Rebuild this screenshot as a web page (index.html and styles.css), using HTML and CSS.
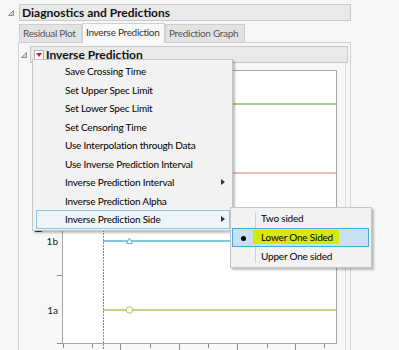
FILE: index.html
```html
<!DOCTYPE html>
<html lang="en">
<head>
    <meta charset="UTF-8">
    <title>Diagnostics and Predictions</title>
    <link rel="stylesheet" href="styles.css">
</head>
<body>

<div class="report">
    <!-- Outer outline -->
    <div class="outline-head">
        <span class="disc"><svg width="6" height="6"><polygon points="5.5,0.5 5.5,5.5 0.5,5.5" fill="#dadada" stroke="#8c8c8c"/></svg></span>
        <div class="title-bar">Diagnostics and Predictions</div>
    </div>

    <div class="outline-body">
        <div class="tabs">
            <div class="tab tab-residual">Residual Plot</div>
            <div class="tab tab-inverse active">Inverse Prediction</div>
            <div class="tab tab-graph">Prediction Graph</div>
        </div>

        <div class="tab-panel">
            <div class="outline-head inner">
                <span class="disc"><svg width="6" height="6"><polygon points="5.5,0.5 5.5,5.5 0.5,5.5" fill="#dadada" stroke="#8c8c8c"/></svg></span>
                <div class="title-bar">
                    <span class="menu-btn"><svg width="6" height="4"><polygon points="0,0 6,0 3,4" fill="#d0202a"/></svg></span>
                    Inverse Prediction
                </div>
            </div>

            <div class="plot">
                <svg class="chart" width="315" height="287" viewBox="0 0 315 287">
                    <text class="axis-title" transform="translate(12,170) rotate(-90)">Batch</text>

                    <rect x="32.5" y="7.5" width="274" height="273" fill="#fff" stroke="#a6a6a6"/>

                    <!-- reference lines -->
                    <line x1="33" x2="306" y1="41" y2="41" stroke="#8cba62" stroke-width="1.5"/>
                    <line x1="33" x2="306" y1="110" y2="110" stroke="#f3bbae" stroke-width="2"/>

                    <!-- batch 1b -->
                    <line x1="73" x2="306" y1="178" y2="178" stroke="#5bb5d5" stroke-width="1.5"/>
                    <polygon points="99.5,175 96.5,180.5 102.5,180.5" fill="#fff" stroke="#5bb5d5"/>

                    <!-- batch 1a -->
                    <line x1="73" x2="306" y1="247" y2="247" stroke="#a8c864" stroke-width="1.5"/>
                    <circle cx="99.5" cy="247" r="3.2" fill="#fff" stroke="#a8c864"/>

                    <line x1="73.5" x2="73.5" y1="8" y2="287" stroke="#5f8af2" stroke-dasharray="2 1"/>

                    <!-- y axis -->
                    <g stroke="#8c8c8c">
                        <line x1="27" x2="32" y1="7.5" y2="7.5"/>
                        <line x1="27" x2="32" y1="144.5" y2="144.5"/>
                        <line x1="27" x2="32" y1="212.5" y2="212.5"/>
                        <line x1="27" x2="32" y1="280.5" y2="280.5"/>
                    </g>
                    <text class="tick-label" x="28" y="182" text-anchor="end">1b</text>
                    <text class="tick-label" x="28" y="251" text-anchor="end">1a</text>

                    <!-- x axis -->
                    <g stroke="#8c8c8c">
                        <line x1="33.5" x2="33.5" y1="281" y2="285"/>
                        <line x1="62.5" x2="62.5" y1="281" y2="285"/>
                        <line x1="90.5" x2="90.5" y1="281" y2="287"/>
                        <line x1="120.5" x2="120.5" y1="281" y2="285"/>
                        <line x1="149.5" x2="149.5" y1="281" y2="287"/>
                        <line x1="178.5" x2="178.5" y1="281" y2="285"/>
                        <line x1="207.5" x2="207.5" y1="281" y2="287"/>
                        <line x1="237.5" x2="237.5" y1="281" y2="285"/>
                        <line x1="265.5" x2="265.5" y1="281" y2="287"/>
                        <line x1="294.5" x2="294.5" y1="281" y2="285"/>
                    </g>
                </svg>
            </div>
        </div>
    </div>
</div>

<!-- Popup menu -->
<div class="menu">
    <div class="menu-item">Save Crossing Time</div>
    <div class="menu-item">Set Upper Spec Limit</div>
    <div class="menu-item">Set Lower Spec Limit</div>
    <div class="menu-item">Set Censoring Time</div>
    <div class="menu-item">Use Interpolation through Data</div>
    <div class="menu-item">Use Inverse Prediction Interval</div>
    <div class="menu-item has-sub">Inverse Prediction Interval</div>
    <div class="menu-item">Inverse Prediction Alpha</div>
    <div class="menu-item has-sub open">Inverse Prediction Side</div>
</div>

<div class="menu submenu">
    <div class="menu-item">Two sided</div>
    <div class="menu-item checked selected"><span class="marker">Lower One Sided</span></div>
    <div class="menu-item">Upper One sided</div>
</div>

</body>
</html>
```

FILE: styles.css
```css
* {
    box-sizing: border-box;
}

html, body {
    margin: 0;
    padding: 0;
    height: 100%;
    overflow: hidden;
    background-color: #f7f7f7;
}

body {
    font-family: Lato, "Open Sans", sans-serif;
    font-size: 10px;
    color: #1a1a1a;
}

.report {
    width: 351px;
    padding-top: 4px;
}

.outline-head {
    display: flex;
    align-items: center;
}

.disc {
    width: 19px;
    height: 17px;
    display: flex;
    align-items: center;
    justify-content: flex-end;
    padding-right: 5px;
}

.title-bar {
    flex: 1;
    height: 17px;
    display: flex;
    align-items: center;
    padding-left: 2px;
    background-color: #e9e9e9;
    border: 1px solid #c9c9c9;
    font-size: 12px;
    font-weight: 700;
    color: #111;
}

.outline-body {
    margin-left: 18px;
}

.tabs {
    display: flex;
    align-items: flex-end;
    height: 22px;
    padding-left: 1px;
    margin-bottom: -1px;
    position: relative;
}

.tab {
    height: 19px;
    line-height: 17px;
    padding-left: 3px;
    background-color: #e3e3e3;
    border: 1px solid #cfcfcf;
    color: #555;
    letter-spacing: -0.3px;
    white-space: nowrap;
    overflow: hidden;
}

.tab-residual { width: 63px; }
.tab-inverse { width: 83px; }
.tab-graph { width: 80px; }

.tab.active {
    height: 20px;
    background-color: #f9f9f9;
    border-bottom-color: #f9f9f9;
    color: #333;
}

.tab-panel {
    height: 320px;
    border: 1px solid #d2d2d2;
    padding: 3px 2px 0 0;
}

.inner .disc {
    width: 11px;
    padding-right: 3px;
}

.menu-btn {
    width: 10px;
    height: 10px;
    margin: 0 2px 0 1px;
    display: flex;
    align-items: center;
    justify-content: center;
    background-color: #fff;
    border: 1px solid #b4b4b4;
}

.plot {
    width: 316px;
    margin-left: 11px;
    border-right: 1px solid #dcdcdc;
}

.chart {
    display: block;
}

.chart text {
    font-family: Lato, "Open Sans", sans-serif;
    font-size: 10px;
    fill: #222;
}

/* popup menus */
.menu {
    position: absolute;
    left: 32px;
    top: 59px;
    width: 201px;
    padding: 2px 2px 1px 3px;
    background-color: #f2f2f2;
    border: 1px solid #c6c6c6;
    box-shadow: 2px 2px 2px rgba(0, 0, 0, 0.25);
    color: #000;
    letter-spacing: -0.2px;
}

.menu-item {
    position: relative;
    height: 18.5px;
    line-height: 16.5px;
    padding-left: 28px;
    border: 1px solid transparent;
    white-space: nowrap;
}

.has-sub::after {
    content: "";
    position: absolute;
    right: 4px;
    top: 5px;
    border-left: 4px solid #333;
    border-top: 3px solid transparent;
    border-bottom: 3px solid transparent;
}

.menu-item.open {
    background-color: #eef5fb;
    border-color: #8cc4ea;
}

.submenu {
    left: 230px;
    top: 207px;
    width: 142px;
    padding: 1px 2px 1px 1px;
}

.submenu::before {
    content: "";
    position: absolute;
    left: 24px;
    top: 4px;
    bottom: 4px;
    border-left: 1px solid #cfcfcf;
}

.submenu .menu-item {
    height: 19px;
    line-height: 17px;
}

.menu-item.selected {
    background-color: #c6e1f0;
    border-color: #4aa8dc;
}

.checked::before {
    content: "";
    position: absolute;
    left: 8px;
    top: 7px;
    width: 5px;
    height: 5px;
    border-radius: 50%;
    background-color: #000;
}

.marker {
    margin-left: -8px;
    padding: 1px 6px 1px 8px;
    background-color: #d4ea00;
}
```
